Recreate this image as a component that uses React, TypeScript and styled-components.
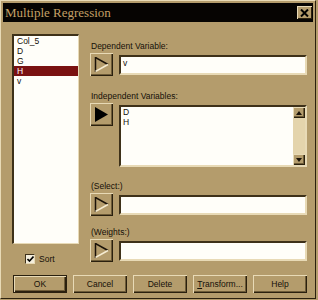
import React from 'react';
import styled, { createGlobalStyle } from 'styled-components';

const TAN = '#b49c6c';
const LIGHT = '#e8dab6';
const DARK = '#2a200e';
const SHADE = '#6e5c38';

const GlobalStyle = createGlobalStyle`
  html, body {
    margin: 0;
    padding: 0;
    background: ${TAN};
  }
`;

const Window = styled.div`
  width: 316px;
  height: 299px;
  box-sizing: border-box;
  background: ${TAN};
  border: 1px solid;
  border-color: ${LIGHT} ${DARK} ${DARK} ${LIGHT};
  padding: 2px;
  display: flex;
  flex-direction: column;
  font-family: 'Liberation Sans', Arial, sans-serif;
  font-size: 8.5px;
  color: #151008;
`;

const TitleBar = styled.div`
  height: 19px;
  flex-shrink: 0;
  background: #060402;
  display: flex;
  align-items: center;
  justify-content: space-between;
  padding: 0 1px 0 2px;
`;

const Title = styled.span`
  font-family: 'Liberation Serif', 'Times New Roman', serif;
  font-size: 13px;
  color: #c4a066;
`;

const CloseButton = styled.div`
  width: 15px;
  height: 13px;
  box-sizing: border-box;
  background: ${TAN};
  box-shadow: inset 1px 1px 0 ${LIGHT}, inset -1px -1px 0 ${DARK};
  display: flex;
  align-items: center;
  justify-content: center;
`;

const Content = styled.div`
  flex: 1;
  display: flex;
  padding: 12px 6px 0 9px;
`;

const LeftCol = styled.div`
  width: 67px;
  display: flex;
  flex-direction: column;
`;

const Sunken = styled.div`
  box-sizing: border-box;
  background: #fffef9;
  border: 2px solid;
  border-color: #3e3119 ${LIGHT} ${LIGHT} #3e3119;
`;

const ListBox = styled(Sunken)`
  height: 210px;
  border-width: 2px 1px 1px 2px;
`;

const ListItem = styled.div<{ $selected?: boolean }>`
  height: 10px;
  line-height: 10px;
  padding-left: 3px;
  background: ${(p) => (p.$selected ? '#7a1212' : 'transparent')};
  color: ${(p) => (p.$selected ? '#fff' : '#151008')};
`;

const SortRow = styled.div`
  margin-top: 10px;
  padding-left: 13px;
  display: flex;
  align-items: center;
  gap: 4px;
  height: 10px;
`;

const CheckBox = styled.div`
  width: 10px;
  height: 10px;
  box-sizing: border-box;
  background: #f4eedd;
  border: 1px solid;
  border-color: #3e3119 ${LIGHT} ${LIGHT} #3e3119;
  display: flex;
  align-items: center;
  justify-content: center;
`;

const RightCol = styled.div`
  margin-left: 11px;
  width: 217px;
  padding-top: 7px;
  display: flex;
  flex-direction: column;
`;

const Group = styled.div<{ $gap: number }>`
  margin-top: ${(p) => p.$gap}px;
`;

const Label = styled.div`
  height: 10px;
  line-height: 10px;
  margin-bottom: 2px;
  padding-left: 1px;
`;

const FieldRow = styled.div<{ $tall?: boolean }>`
  display: flex;
  align-items: ${(p) => (p.$tall ? 'flex-start' : 'center')};
  gap: 6px;
`;

const Raised = styled.div`
  box-sizing: border-box;
  background: ${TAN};
  box-shadow: inset 1px 1px 0 ${LIGHT}, inset -1px -1px 0 ${DARK}, inset -2px -2px 0 ${SHADE};
`;

const ArrowButton = styled(Raised)`
  width: 23px;
  height: 23px;
  flex-shrink: 0;
  display: flex;
  align-items: center;
  justify-content: center;
`;

const TextField = styled(Sunken)`
  flex: 1;
  height: 20px;
  padding: 1px 0 0 2px;
  line-height: 10px;
`;

const TextArea = styled(Sunken)`
  flex: 1;
  height: 62px;
  margin-top: 2px;
  display: flex;
`;

const AreaList = styled.div`
  flex: 1;
  padding-left: 2px;
  line-height: 10px;
`;

const ScrollTrack = styled.div`
  width: 12px;
  background: #e4d4ac;
  display: flex;
  flex-direction: column;
  justify-content: space-between;
`;

const ScrollArrow = styled(Raised)`
  width: 12px;
  height: 11px;
  display: flex;
  align-items: center;
  justify-content: center;
`;

const ButtonRow = styled.div`
  display: flex;
  gap: 6px;
  padding: 0 0 3px 10px;
`;

const PushButton = styled(Raised)<{ $default?: boolean }>`
  width: 54px;
  height: 18px;
  display: flex;
  align-items: center;
  justify-content: center;
  outline: ${(p) => (p.$default ? `1px solid ${DARK}` : 'none')};
  outline-offset: -1px;
  box-shadow: ${(p) =>
    p.$default
      ? `inset 2px 2px 0 ${LIGHT}, inset -2px -2px 0 ${DARK}, inset -3px -3px 0 ${SHADE}`
      : `inset 1px 1px 0 ${LIGHT}, inset -1px -1px 0 ${DARK}, inset -2px -2px 0 ${SHADE}`};
`;

const Arrow = ({ filled }: { filled?: boolean }) =>
  filled ? (
    <svg width="15" height="15" viewBox="0 0 15 15">
      <polygon points="1,0 1,15 14,7.5" fill="#000" />
    </svg>
  ) : (
    <svg width="15" height="15" viewBox="0 0 15 15">
      <line x1="1.5" y1="0" x2="1.5" y2="15" stroke="#1a1208" strokeWidth="1.5" />
      <line x1="1.5" y1="0.5" x2="14" y2="7.5" stroke="#1a1208" strokeWidth="1.5" />
      <line x1="1.5" y1="14.5" x2="14" y2="7.5" stroke="#f6ecd2" strokeWidth="1.5" />
    </svg>
  );

const SmallTri = ({ up }: { up?: boolean }) => (
  <svg width="6" height="4" viewBox="0 0 6 4">
    <polygon points={up ? '0,4 6,4 3,0' : '0,0 6,0 3,4'} fill="#1a1208" />
  </svg>
);

const Field = ({ label, value, gap }: { label: string; value?: string; gap: number }) => (
  <Group $gap={gap}>
    <Label>{label}</Label>
    <FieldRow>
      <ArrowButton>
        <Arrow />
      </ArrowButton>
      <TextField>{value}</TextField>
    </FieldRow>
  </Group>
);

const columns = ['Col_5', 'D', 'G', 'H', 'v'];

export default function App() {
  return (
    <>
      <GlobalStyle />
      <Window>
        <TitleBar>
          <Title>Multiple Regression</Title>
          <CloseButton>
            <svg width="9" height="8" viewBox="0 0 9 8">
              <path d="M1 0.5 L8 7.5 M8 0.5 L1 7.5" stroke="#000" strokeWidth="2" />
            </svg>
          </CloseButton>
        </TitleBar>
        <Content>
          <LeftCol>
            <ListBox>
              {columns.map((c) => (
                <ListItem key={c} $selected={c === 'H'}>
                  {c}
                </ListItem>
              ))}
            </ListBox>
            <SortRow>
              <CheckBox>
                <svg width="7" height="6" viewBox="0 0 7 6">
                  <path d="M0.5 3 L2.5 5 L6.5 0.5" stroke="#000" strokeWidth="1.6" fill="none" />
                </svg>
              </CheckBox>
              <span>Sort</span>
            </SortRow>
          </LeftCol>
          <RightCol>
            <Field label="Dependent Variable:" value="v" gap={0} />
            <Group $gap={15}>
              <Label>Independent Variables:</Label>
              <FieldRow $tall>
                <ArrowButton>
                  <Arrow filled />
                </ArrowButton>
                <TextArea>
                  <AreaList>
                    <div>D</div>
                    <div>H</div>
                  </AreaList>
                  <ScrollTrack>
                    <ScrollArrow>
                      <SmallTri up />
                    </ScrollArrow>
                    <ScrollArrow>
                      <SmallTri />
                    </ScrollArrow>
                  </ScrollTrack>
                </TextArea>
              </FieldRow>
            </Group>
            <Field label="(Select:)" gap={14} />
            <Field label="(Weights:)" gap={11} />
          </RightCol>
        </Content>
        <ButtonRow>
          <PushButton $default>OK</PushButton>
          <PushButton>Cancel</PushButton>
          <PushButton>Delete</PushButton>
          <PushButton>
            <span>
              <u>T</u>ransform...
            </span>
          </PushButton>
          <PushButton>Help</PushButton>
        </ButtonRow>
      </Window>
    </>
  );
}
